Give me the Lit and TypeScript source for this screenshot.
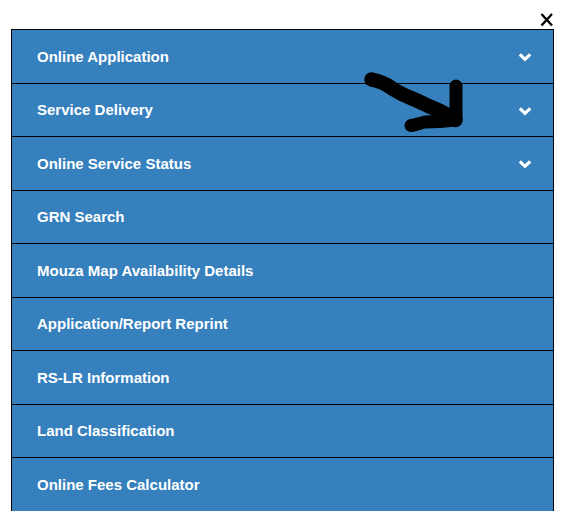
import { LitElement, html, css, svg } from "lit";
import { customElement } from "lit/decorators.js";

const ITEMS: { label: string; more?: boolean }[] = [
  { label: "Online Application", more: true },
  { label: "Service Delivery", more: true },
  { label: "Online Service Status", more: true },
  { label: "GRN Search" },
  { label: "Mouza Map Availability Details" },
  { label: "Application/Report Reprint" },
  { label: "RS-LR Information" },
  { label: "Land Classification" },
  { label: "Online Fees Calculator" },
];

@customElement("app-root")
export class AppRoot extends LitElement {
  static styles = css`
    :host {
      display: block;
      position: relative;
      width: 561px;
      height: 522px;
      background: #fff;
      font-family: "Liberation Sans", Arial, sans-serif;
      overflow: hidden;
    }
    .wrap {
      display: flex;
      flex-direction: column;
      padding: 10px 7px 0 11px;
    }
    .close {
      display: flex;
      justify-content: flex-end;
      height: 19px;
    }
    .close svg {
      display: block;
      margin-top: 2px;
    }
    .menu {
      border: solid #000;
      border-width: 1px 1px 0 1px;
      background: #3580bd;
    }
    .row {
      display: flex;
      align-items: center;
      justify-content: space-between;
      box-sizing: border-box;
      height: 53.5px;
      padding: 0 21px 0 25px;
      border-bottom: 1px solid #000;
      color: #fff;
      font-size: 15px;
      font-weight: 700;
    }
    .row:last-child {
      border-bottom: 0;
      height: 53px;
    }
    .row svg {
      display: block;
      margin-top: 1.5px;
    }
    .scribble {
      position: absolute;
      left: 0;
      top: 0;
      pointer-events: none;
    }
  `;

  render() {
    return html`
      <div class="wrap">
        <div class="close">
          <svg width="15" height="15" viewBox="0 0 15 15">
            <path d="M2.500 2 13 13.500M13 2 2.500 13.500" stroke="#000" stroke-width="2.300" fill="none" />
          </svg>
        </div>
        <div class="menu">
          ${ITEMS.map(
            (it) => html`
              <div class="row">
                <span>${it.label}</span>
                ${it.more
                  ? html`<svg width="14" height="10" viewBox="0 0 14 10">
                      <path d="M1.800 2.400 7 7.400 12.200 2.400" stroke="#fff" stroke-width="3.200" fill="none" />
                    </svg>`
                  : null}
              </div>
            `
          )}
        </div>
      </div>
      <svg class="scribble" width="561" height="522" viewBox="0 0 561 522">
        ${svg`<path d="M371.500 79.500 C378 81 385 83 390 87 C394 90 398 92 402 94 C408 97 414 99 420 102 C428 106 436 109 442 112 C447 115 451 117 455.500 120" stroke="#000" stroke-width="14.500" stroke-linecap="round" stroke-linejoin="round" fill="none" />
        <path d="M456 86 L456 120 L440 121.500 L425 122 C420 123 416 125 411 125.500" stroke="#000" stroke-width="13" stroke-linecap="round" stroke-linejoin="round" fill="none" />`}
      </svg>
    `;
  }
}
